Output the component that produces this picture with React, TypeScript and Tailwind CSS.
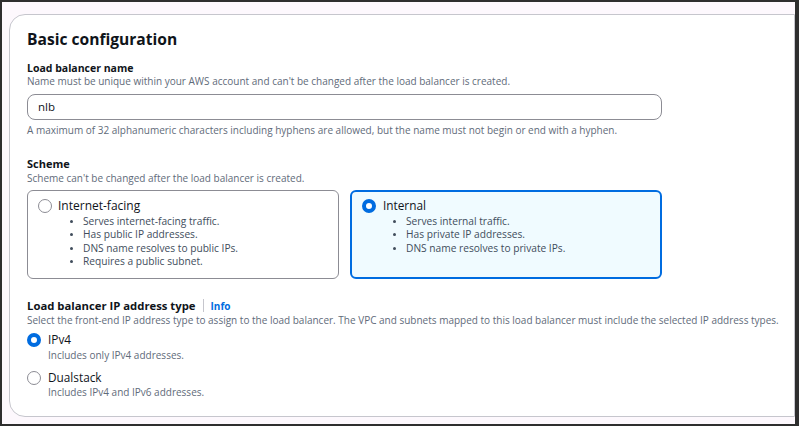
import React from 'react';

const font = { fontFamily: '"Open Sans", "Noto Sans", sans-serif' };

function Radio({ checked }: { checked?: boolean }) {
  return checked ? (
    <span className="block w-[14px] h-[14px] rounded-full border-[4px] border-[#006ce0] bg-white shrink-0" />
  ) : (
    <span className="block w-[14px] h-[14px] rounded-full border-[1.5px] border-[#8c8c94] bg-white shrink-0" />
  );
}

function Bullets({ items }: { items: string[] }) {
  return (
    <ul className="mt-[1px]">
      {items.map((t) => (
        <li key={t} className="flex items-center h-[13.5px] text-[10.2px] leading-[13.5px] text-[#414d5c]">
          <span className="w-[3px] h-[3px] rounded-full bg-[#414d5c] mr-[10px]" />
          {t}
        </li>
      ))}
    </ul>
  );
}

export default function App() {
  return (
    <div style={font} className="w-[799px] h-[426px] bg-[#fdf8fd] border-l-2 border-t-2 border-r-4 border-b-2 border-[#2e2e2e] pl-[7px] pt-[12px] pb-[7px]">
      <div className="h-full bg-white border border-[#c6c6cd] rounded-l-[16px] pl-[17px] pt-[13px] text-[#0f141a]">
        <h2 className="text-[15.6px] leading-[22px] font-bold">Basic configuration</h2>

        <div className="mt-[11px] text-[10.5px] leading-[14px] font-bold">Load balancer name</div>
        <div className="text-[10px] leading-[13px] text-[#5f6b7a]">
          Name must be unique within your AWS account and can't be changed after the load balancer is created.
        </div>
        <div className="mt-[5.5px] w-[635px] h-[26px] border border-[#8c8c94] rounded-[8px] flex items-center pl-[10px] text-[11.5px]">
          nlb
        </div>
        <div className="mt-[4.5px] text-[10px] leading-[13px] text-[#5f6b7a]">
          A maximum of 32 alphanumeric characters including hyphens are allowed, but the name must not begin or end with a hyphen.
        </div>

        <div className="mt-[19.5px] text-[11px] leading-[14px] font-bold">Scheme</div>
        <div className="mt-[1.5px] text-[10px] leading-[13px] text-[#5f6b7a]">
          Scheme can't be changed after the load balancer is created.
        </div>
        <div className="mt-[4.5px] w-[635px] grid grid-cols-2 gap-[11px]">
          <div className="h-[89px] border border-[#8c8c94] rounded-[6px] pl-[10px] pt-[7px]">
            <div className="flex items-center h-[16px] gap-[6px]">
              <Radio />
              <span className="text-[12px]">Internet-facing</span>
            </div>
            <div className="pl-[32px]">
              <Bullets
                items={[
                  'Serves internet-facing traffic.',
                  'Has public IP addresses.',
                  'DNS name resolves to public IPs.',
                  'Requires a public subnet.',
                ]}
              />
            </div>
          </div>
          <div className="h-[89px] border-2 border-[#006ce0] bg-[#f0fbff] rounded-[6px] pl-[10px] pt-[6px]">
            <div className="flex items-center h-[16px] gap-[7px]">
              <Radio checked />
              <span className="text-[11.8px]">Internal</span>
            </div>
            <div className="pl-[31px]">
              <Bullets
                items={[
                  'Serves internal traffic.',
                  'Has private IP addresses.',
                  'DNS name resolves to private IPs.',
                ]}
              />
            </div>
          </div>
        </div>

        <div className="mt-[20px] flex items-center h-[14px] text-[11.3px] leading-[14px] font-bold">
          Load balancer IP address type
          <span className="mx-[7px] w-px h-[13px] bg-[#c6c6cd]" />
          <span className="text-[#006ce0] text-[10px]">Info</span>
        </div>
        <div className="mt-[1.5px] text-[10px] leading-[13px] text-[#5f6b7a]">
          Select the front-end IP address type to assign to the load balancer. The VPC and subnets mapped to this load balancer must include the selected IP address types.
        </div>

        <div className="mt-[4.5px] flex items-center h-[16px] gap-[7px]">
          <Radio checked />
          <span className="text-[11.8px]">IPv4</span>
        </div>
        <div className="mt-[1.5px] pl-[21px] text-[10px] leading-[13px] text-[#5f6b7a]">Includes only IPv4 addresses.</div>

        <div className="mt-[7.5px] flex items-center h-[16px] gap-[7px]">
          <Radio />
          <span className="text-[11.8px]">Dualstack</span>
        </div>
        <div className="mt-[0.5px] pl-[21px] text-[10px] leading-[13px] text-[#5f6b7a]">Includes IPv4 and IPv6 addresses.</div>
      </div>
    </div>
  );
}
